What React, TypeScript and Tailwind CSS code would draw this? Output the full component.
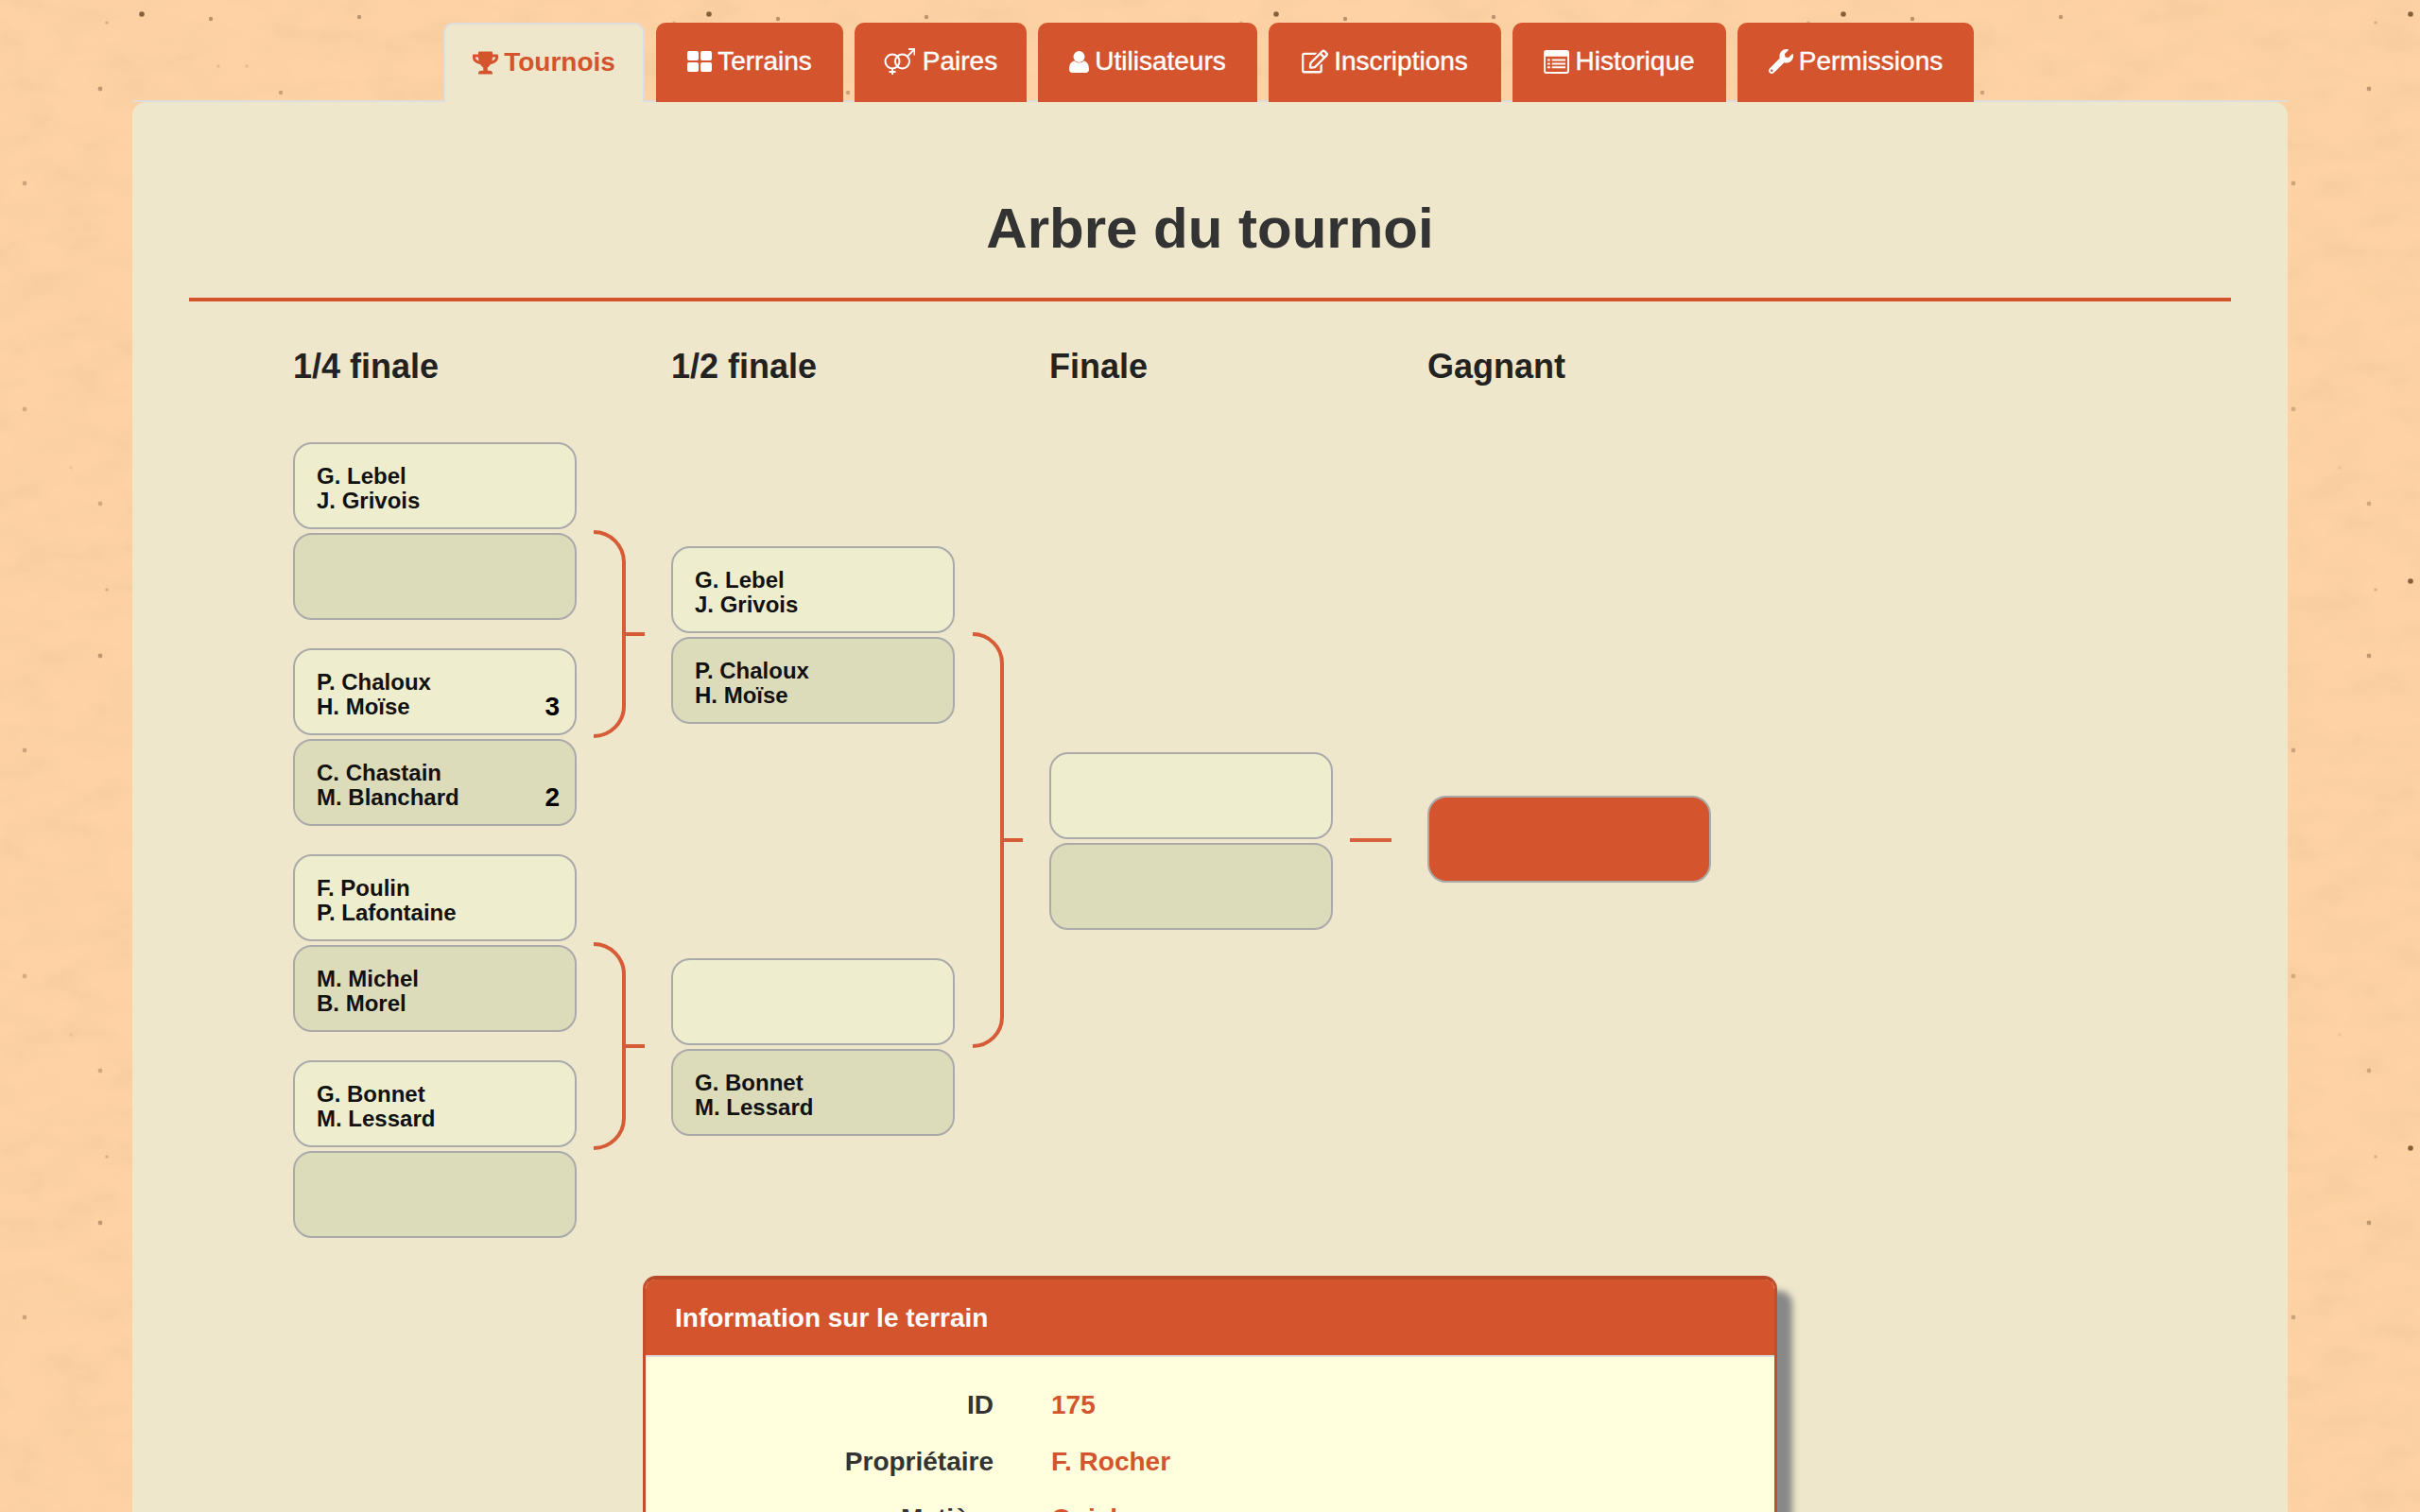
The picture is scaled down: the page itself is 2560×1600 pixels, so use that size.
import { FaTrophy, FaRegEdit, FaWrench } from "react-icons/fa";

const SPECKS: [number, number, number, number][] = [
  [150, 15, 2.8, 0.75],
  [113, 24, 1.8, 0.22],
  [223, 20, 2.2, 0.42],
  [380, 18, 2.2, 0.4],
  [106, 94, 2.4, 0.38],
  [26, 194, 2.4, 0.3],
  [231, 70, 1.8, 0.14],
  [261, 70, 1.8, 0.14],
  [297, 98, 2.2, 0.32],
  [26, 433, 2.4, 0.25],
  [75, 495, 1.8, 0.1],
  [106, 533, 2.4, 0.28],
];

function Paper() {
  return (
    <svg className="absolute inset-0 h-full w-full" aria-hidden="true">
      <defs>
        <filter id="mottle" x="0" y="0" width="100%" height="100%">
          <feTurbulence type="fractalNoise" baseFrequency="0.018 0.035" numOctaves="4" seed="7" />
          <feColorMatrix values="0 0 0 0 0.8  0 0 0 0 0.55  0 0 0 0 0.3  0 0 0 1.1 -0.42" />
        </filter>
        <filter id="soft">
          <feGaussianBlur stdDeviation="0.7" />
        </filter>
        <pattern id="specks" width="600" height="600" patternUnits="userSpaceOnUse">
          {SPECKS.map(([x, y, r, o]) => (
            <circle key={`${x}-${y}`} cx={x} cy={y} r={r} fill="#5b3a1c" opacity={o} filter="url(#soft)" />
          ))}
        </pattern>
      </defs>
      <rect width="100%" height="100%" fill="#fed2a4" />
      <rect width="100%" height="100%" filter="url(#mottle)" opacity="0.5" />
      <rect width="100%" height="100%" fill="url(#specks)" />
    </svg>
  );
}

function ThLarge() {
  return (
    <svg viewBox="0 0 26 22" className="h-[22px] w-[26px]" fill="currentColor" aria-hidden="true">
      <rect width="12" height="10" rx="2" />
      <rect x="14" width="12" height="10" rx="2" />
      <rect y="12" width="12" height="10" rx="2" />
      <rect x="14" y="12" width="12" height="10" rx="2" />
    </svg>
  );
}

function VenusMars() {
  return (
    <svg viewBox="0 0 33 28" className="h-[28px] w-[33px]" fill="none" stroke="currentColor" strokeWidth="2" aria-hidden="true">
      <circle cx="9" cy="14" r="7.5" />
      <circle cx="19.500" cy="14" r="7.500" />
      <path d="M9 21.500V28M5.500 25H12.500M25 8.500L32 1.500M26 1H32.500V7.500" />
    </svg>
  );
}

function User() {
  return (
    <svg viewBox="0 0 21 23" className="h-[23px] w-[21px]" fill="currentColor" aria-hidden="true">
      <circle cx="10.500" cy="6" r="6" />
      <path d="M0 19.500C0 14.500 2 11 5.500 10.500C7.500 13 13.500 13 15.500 10.500C19 11 21 14.500 21 19.500C21 21.800 19.500 23 17.500 23H3.500C1.500 23 0 21.800 0 19.500Z" />
    </svg>
  );
}

function ListAlt() {
  return (
    <svg viewBox="0 0 28 26" className="h-[25px] w-[27px]" aria-hidden="true">
      <path
        fillRule="evenodd"
        fill="currentColor"
        d="M3 0h22a3 3 0 0 1 3 3v20a3 3 0 0 1-3 3H3a3 3 0 0 1-3-3V3a3 3 0 0 1 3-3zM2 7v15.500a1.500 1.500 0 0 0 1.500 1.500h21a1.500 1.500 0 0 0 1.500-1.500V7zM4 10h3v2H4zM9 10h15v2H9zM4 14h3v2H4zM9 14h15v2H9zM4 18h3v2H4zM9 18h15v2H9z"
      />
    </svg>
  );
}

const TABS = [
  { label: "Tournois", icon: <FaTrophy size={27} />, width: "w-[213px]", gap: "gap-[6px]", active: true },
  { label: "Terrains", icon: <ThLarge />, width: "w-[198px]", gap: "gap-[6px]", active: false },
  { label: "Paires", icon: <VenusMars />, width: "w-[182px]", gap: "gap-[8px]", active: false },
  { label: "Utilisateurs", icon: <User />, width: "w-[232px]", gap: "gap-[6px]", active: false },
  { label: "Inscriptions", icon: <FaRegEdit size={28} />, width: "w-[246px]", gap: "gap-[6px]", active: false },
  { label: "Historique", icon: <ListAlt />, width: "w-[226px]", gap: "gap-[6px]", active: false },
  { label: "Permissions", icon: <FaWrench size={26} />, width: "w-[250px]", gap: "gap-[6px]", active: false },
];

function Tabs() {
  return (
    <nav className="relative flex h-[84px] justify-center gap-[12px] border-b-2 border-[#dddddd] pr-[3px] text-[28px]">
      {TABS.map((tab) =>
        tab.active ? (
          <a
            key={tab.label}
            className={`relative z-10 -mb-[2px] flex items-center justify-center rounded-t-[10px] border-2 border-b-0 border-[#dddddd] bg-[#eee7cb] pb-[2px] font-bold text-[#d4542e] ${tab.gap} ${tab.width}`}
          >
            {tab.icon}
            {tab.label}
          </a>
        ) : (
          <a
            key={tab.label}
            className={`relative z-10 -mb-[2px] flex items-center justify-center rounded-t-[10px] bg-[#d4542e] pb-[2px] text-white [-webkit-text-stroke:0.4px_white] ${tab.gap} ${tab.width}`}
          >
            {tab.icon}
            {tab.label}
          </a>
        )
      )}
    </nav>
  );
}

function Team({ names, score, alt }: { names?: [string, string]; score?: number; alt?: boolean }) {
  return (
    <div
      className={`relative h-[92px] w-[300px] rounded-[20px] border-2 border-[#aaaaaa] px-[23px] pt-[21px] text-[24px] leading-[26px] font-bold text-[#111] ${
        alt ? "bg-[#dddcba]" : "bg-[#eeeecf]"
      }`}
    >
      {names && (
        <>
          <div>{names[0]}</div>
          <div>{names[1]}</div>
        </>
      )}
      {score !== undefined && (
        <span className="absolute right-[16px] bottom-[12px] text-[28px] leading-[32px] font-bold text-black">{score}</span>
      )}
    </div>
  );
}

type TeamData = { names?: [string, string]; score?: number };

function Match({ top, bottom }: { top: TeamData; bottom: TeamData }) {
  return (
    <div className="flex flex-col gap-[4px]">
      <Team {...top} />
      <Team {...bottom} alt />
    </div>
  );
}

function Bracket({ height, arm, tick }: { height: number; arm: number; tick: number }) {
  const mid = height / 2;
  return (
    <svg width={arm + tick} height={height} className="block text-[#d4542e]" aria-hidden="true">
      <path
        d={`M0 2A${arm - 2} ${arm - 2} 0 0 1 ${arm - 2} ${arm}V${height - arm}A${arm - 2} ${arm - 2} 0 0 1 0 ${height - 2}M${arm - 2} ${mid}H${arm + tick}`}
        fill="none"
        stroke="currentColor"
        strokeWidth="4"
        opacity="0.95"
      />
    </svg>
  );
}

function Heading({ children }: { children: string }) {
  return <h3 className="h-[54px] text-[36px] leading-[52px] font-bold text-[#222]">{children}</h3>;
}

function Tree() {
  return (
    <div className="mt-[43px] flex items-start pl-[110px]">
      <div className="w-[300px]">
        <Heading>1/4 finale</Heading>
        <div className="mt-[52px] flex flex-col gap-[30px]">
          <Match top={{ names: ["G. Lebel", "J. Grivois"] }} bottom={{}} />
          <Match top={{ names: ["P. Chaloux", "H. Moïse"], score: 3 }} bottom={{ names: ["C. Chastain", "M. Blanchard"], score: 2 }} />
          <Match top={{ names: ["F. Poulin", "P. Lafontaine"] }} bottom={{ names: ["M. Michel", "B. Morel"] }} />
          <Match top={{ names: ["G. Bonnet", "M. Lessard"] }} bottom={{}} />
        </div>
      </div>
      <div className="ml-[18px] flex w-[54px] flex-col gap-[216px] pt-[199px]">
        <Bracket height={220} arm={34} tick={20} />
        <Bracket height={220} arm={34} tick={20} />
      </div>
      <div className="ml-[28px] w-[300px]">
        <Heading>1/2 finale</Heading>
        <div className="mt-[162px] flex flex-col gap-[248px]">
          <Match top={{ names: ["G. Lebel", "J. Grivois"] }} bottom={{ names: ["P. Chaloux", "H. Moïse"] }} />
          <Match top={{}} bottom={{ names: ["G. Bonnet", "M. Lessard"] }} />
        </div>
      </div>
      <div className="ml-[19px] w-[53px] pt-[307px]">
        <Bracket height={440} arm={33} tick={20} />
      </div>
      <div className="ml-[28px] w-[300px]">
        <Heading>Finale</Heading>
        <div className="mt-[380px]">
          <Match top={{}} bottom={{}} />
        </div>
      </div>
      <div className="ml-[18px] mt-[525px] h-[4px] w-[44px] bg-[#d9603c]" />
      <div className="ml-[38px] w-[300px]">
        <Heading>Gagnant</Heading>
        <div className="mt-[426px] h-[92px] w-[300px] rounded-[20px] border-2 border-[#aaaaaa] bg-[#d4542e]" />
      </div>
    </div>
  );
}

const FIELDS = [
  ["ID", "175"],
  ["Propriétaire", "F. Rocher"],
  ["Matière", "Quick"],
];

function InfoCard() {
  return (
    <section className="mx-auto mt-[40px] w-[1200px] rounded-t-[14px] border-x-[3px] border-t-[4px] border-x-[#c24f2b] border-t-[#b94a28] bg-[#ffffdd] shadow-[16px_16px_7px_#888888]">
      <h4 className="h-[80px] rounded-t-[10px] bg-[#d4542e] pl-[31px] text-[28px] leading-[82px] font-bold text-white">Information sur le terrain</h4>
      <div className="h-[2px] bg-[#dddddd]" />
      <dl className="grid grid-cols-[368px_1fr] gap-x-[61px] gap-y-[20px] pt-[31px] text-[28px] leading-[40px] font-bold">
        {FIELDS.map(([label, value]) => (
          <div key={label} className="contents">
            <dt className="text-right text-[#333]">{label}</dt>
            <dd className="text-[#d4542e]">{value}</dd>
          </div>
        ))}
      </dl>
    </section>
  );
}

export default function App() {
  return (
    <div className="relative h-[1600px] overflow-hidden [font-family:'Liberation_Sans',Arial,sans-serif]">
      <Paper />
      <div className="relative mx-[140px] pt-[24px]">
        <Tabs />
        <main className="h-[1500px] rounded-t-[14px] bg-[#eee7cb] px-[60px]">
          <h1 className="pt-[101px] text-center text-[60px] leading-[66px] font-bold text-[#333]">Arbre du tournoi</h1>
          <div className="mt-[40px] h-[4px] bg-[#d4542e]" />
          <Tree />
          <InfoCard />
        </main>
      </div>
    </div>
  );
}
